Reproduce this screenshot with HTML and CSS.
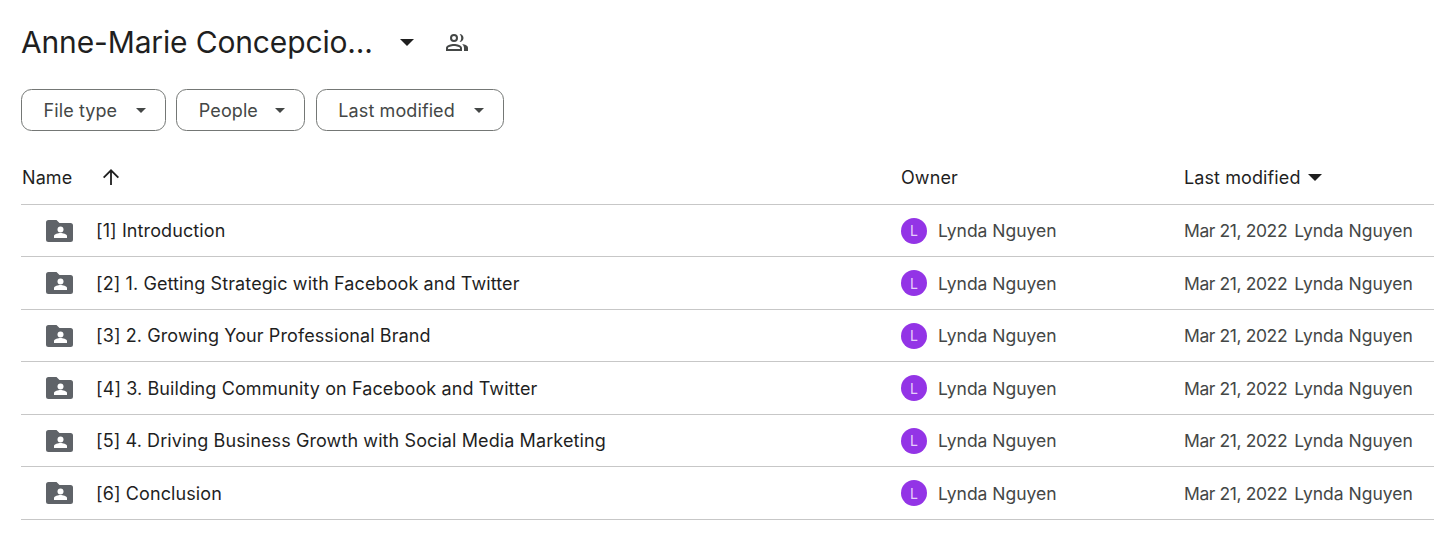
FILE: index.html
```html
<!DOCTYPE html>
<html lang="en">
<head>
<meta charset="utf-8">
<title>Anne-Marie Concepcion</title>
<link rel="stylesheet" href="styles.css">
</head>
<body>
<header class="title-bar">
  <h1 class="title">Anne-Marie Concepcio...</h1>
  <svg class="title-caret" viewBox="0 0 14 7"><path d="M0 0h14L7 7z"/></svg>
  <svg class="shared" viewBox="0 0 24 24"><path fill-rule="evenodd" d="M9 4a4 4 0 1 1 0 8 4 4 0 0 1 0-8zm0 2a2 2 0 1 0 0 4 2 2 0 0 0 0-4zM9 14c3 0 8 1.300 8 4v3H1v-3c0-2.700 5-4 8-4zm0 2c-2.700 0-6 1.200-6 2v1h12v-1c0-.8-3.300-2-6-2z"/><path d="M14.500 4c2.300.1 4 1.800 4 4s-1.700 3.900-4 4c1-1 1.700-2.400 1.700-4s-.7-3-1.700-4zM17 14c3 .3 6 1.500 6 4v3h-4v-3c0-1.500-.8-3-2-4z"/></svg>
</header>
<div class="filters">
  <button class="chip chip-type">File type<svg class="chip-caret" viewBox="0 0 10 5"><path d="M0 0h10L5 5z"/></svg></button>
  <button class="chip chip-people">People<svg class="chip-caret" viewBox="0 0 10 5"><path d="M0 0h10L5 5z"/></svg></button>
  <button class="chip chip-modified">Last modified<svg class="chip-caret" viewBox="0 0 10 5"><path d="M0 0h10L5 5z"/></svg></button>
</div>
<div class="table">
  <div class="row head">
    <div class="cell-name"><span class="head-name">Name</span>
      <svg class="arrow" viewBox="0 0 18 18"><path d="M9 1 1 9l1.300 1.300 5.800-5.800V17h1.800V4.500l5.800 5.800L17 9z"/></svg></div>
    <div class="cell-owner">Owner</div>
    <div class="cell-mod">Last modified<svg class="head-caret" viewBox="0 0 14 7"><path d="M0 0h14L7 7z"/></svg></div>
  </div>
  <div class="row item">
    <div class="cell-name"><svg class="folder" viewBox="0 0 27 22"><path d="M2.500 0h8l3 3h11A2.500 2.500 0 0 1 27 5.500v14a2.500 2.500 0 0 1-2.500 2.500h-22A2.500 2.500 0 0 1 0 19.500v-17A2.500 2.500 0 0 1 2.500 0z"/><circle class="fp" cx="14.500" cy="9.500" r="3"/><path class="fp" d="M8 18v-2c0-2 4.300-3 6.500-3s6.500 1 6.500 3v2z"/></svg><span class="name-text">[1] Introduction</span></div>
    <div class="cell-owner"><span class="avatar">L</span><span class="person">Lynda Nguyen</span></div>
    <div class="cell-mod"><span class="date">Mar 21, 2022</span><span class="person">Lynda Nguyen</span></div>
  </div>
  <div class="row item">
    <div class="cell-name"><svg class="folder" viewBox="0 0 27 22"><path d="M2.500 0h8l3 3h11A2.500 2.500 0 0 1 27 5.500v14a2.500 2.500 0 0 1-2.500 2.500h-22A2.500 2.500 0 0 1 0 19.500v-17A2.500 2.500 0 0 1 2.500 0z"/><circle class="fp" cx="14.500" cy="9.500" r="3"/><path class="fp" d="M8 18v-2c0-2 4.300-3 6.500-3s6.500 1 6.500 3v2z"/></svg><span class="name-text">[2] 1. Getting Strategic with Facebook and Twitter</span></div>
    <div class="cell-owner"><span class="avatar">L</span><span class="person">Lynda Nguyen</span></div>
    <div class="cell-mod"><span class="date">Mar 21, 2022</span><span class="person">Lynda Nguyen</span></div>
  </div>
  <div class="row item">
    <div class="cell-name"><svg class="folder" viewBox="0 0 27 22"><path d="M2.500 0h8l3 3h11A2.500 2.500 0 0 1 27 5.500v14a2.500 2.500 0 0 1-2.500 2.500h-22A2.500 2.500 0 0 1 0 19.500v-17A2.500 2.500 0 0 1 2.500 0z"/><circle class="fp" cx="14.500" cy="9.500" r="3"/><path class="fp" d="M8 18v-2c0-2 4.300-3 6.500-3s6.500 1 6.500 3v2z"/></svg><span class="name-text">[3] 2. Growing Your Professional Brand</span></div>
    <div class="cell-owner"><span class="avatar">L</span><span class="person">Lynda Nguyen</span></div>
    <div class="cell-mod"><span class="date">Mar 21, 2022</span><span class="person">Lynda Nguyen</span></div>
  </div>
  <div class="row item">
    <div class="cell-name"><svg class="folder" viewBox="0 0 27 22"><path d="M2.500 0h8l3 3h11A2.500 2.500 0 0 1 27 5.500v14a2.500 2.500 0 0 1-2.500 2.500h-22A2.500 2.500 0 0 1 0 19.500v-17A2.500 2.500 0 0 1 2.500 0z"/><circle class="fp" cx="14.500" cy="9.500" r="3"/><path class="fp" d="M8 18v-2c0-2 4.300-3 6.500-3s6.500 1 6.500 3v2z"/></svg><span class="name-text">[4] 3. Building Community on Facebook and Twitter</span></div>
    <div class="cell-owner"><span class="avatar">L</span><span class="person">Lynda Nguyen</span></div>
    <div class="cell-mod"><span class="date">Mar 21, 2022</span><span class="person">Lynda Nguyen</span></div>
  </div>
  <div class="row item">
    <div class="cell-name"><svg class="folder" viewBox="0 0 27 22"><path d="M2.500 0h8l3 3h11A2.500 2.500 0 0 1 27 5.500v14a2.500 2.500 0 0 1-2.500 2.500h-22A2.500 2.500 0 0 1 0 19.500v-17A2.500 2.500 0 0 1 2.500 0z"/><circle class="fp" cx="14.500" cy="9.500" r="3"/><path class="fp" d="M8 18v-2c0-2 4.300-3 6.500-3s6.500 1 6.500 3v2z"/></svg><span class="name-text">[5] 4. Driving Business Growth with Social Media Marketing</span></div>
    <div class="cell-owner"><span class="avatar">L</span><span class="person">Lynda Nguyen</span></div>
    <div class="cell-mod"><span class="date">Mar 21, 2022</span><span class="person">Lynda Nguyen</span></div>
  </div>
  <div class="row item">
    <div class="cell-name"><svg class="folder" viewBox="0 0 27 22"><path d="M2.500 0h8l3 3h11A2.500 2.500 0 0 1 27 5.500v14a2.500 2.500 0 0 1-2.500 2.500h-22A2.500 2.500 0 0 1 0 19.500v-17A2.500 2.500 0 0 1 2.500 0z"/><circle class="fp" cx="14.500" cy="9.500" r="3"/><path class="fp" d="M8 18v-2c0-2 4.300-3 6.500-3s6.500 1 6.500 3v2z"/></svg><span class="name-text">[6] Conclusion</span></div>
    <div class="cell-owner"><span class="avatar">L</span><span class="person">Lynda Nguyen</span></div>
    <div class="cell-mod"><span class="date">Mar 21, 2022</span><span class="person">Lynda Nguyen</span></div>
  </div>
</div>
</body>
</html>
```
FILE: styles.css
```css
* { box-sizing: border-box; }
html, body { overflow: hidden; }
body { margin: 0; background: #fff; color: #1f1f1f; font-family: Inter, Roboto, sans-serif; font-size: 18px; letter-spacing: 0.1px; height: 541px; }
.title-bar { display: flex; align-items: center; height: 42px; margin-top: 21px; padding-left: 21px; }
.title { margin: 0; width: 352px; font-size: 30px; font-weight: 400; letter-spacing: -0.15px; white-space: nowrap; color: #1f1f1f; }
.title-caret { width: 14px; height: 7px; margin-left: 27px; fill: #1f1f1f; }
.shared { width: 24px; height: 24px; margin-left: 31px; fill: #444746; }
.filters { display: flex; gap: 10.500px; margin-top: 26px; padding-left: 21px; }
.chip { display: flex; align-items: center; justify-content: space-between; height: 42px; padding: 0 19px 0 21.500px; border: 1px solid #747775; border-radius: 10.500px; background: #fff; color: #444746; font: inherit; letter-spacing: inherit; }
.chip-type { width: 144.800px; }
.chip-people { width: 129px; }
.chip-modified { width: 188px; }
.chip-caret { width: 10px; height: 5px; fill: #444746; }
.table { margin: 20px 0 0 21px; }
.row { display: flex; align-items: center; height: 52.500px; border-bottom: 1px solid #c7c7c7; }
.head { height: 53.500px; }
.item { padding-top: .5px; }
.cell-name { display: flex; align-items: center; width: 880px; flex: none; }
.cell-owner { display: flex; align-items: center; width: 283px; flex: none; }
.cell-mod { display: flex; align-items: center; flex: none; }
.head-name { width: 81px; padding-left: 1px; }
.arrow { width: 18px; height: 18px; fill: #1f1f1f; }
.head-caret { width: 14px; height: 7px; margin-left: 7px; fill: #1f1f1f; }
.folder { width: 27px; height: 22px; margin: 0 23.500px 0 24.500px; fill: #5f6368; }
.fp { fill: #fff; }
.avatar { display: flex; align-items: center; justify-content: center; width: 26px; height: 26px; margin-right: 11px; border-radius: 50%; background: #9334e6; color: #e6cffa; font-size: 14px; }
.person, .date { color: #444746; font-size: 17.500px; letter-spacing: 0; }
.date { margin-right: 7px; letter-spacing: -0.4px; }
```
